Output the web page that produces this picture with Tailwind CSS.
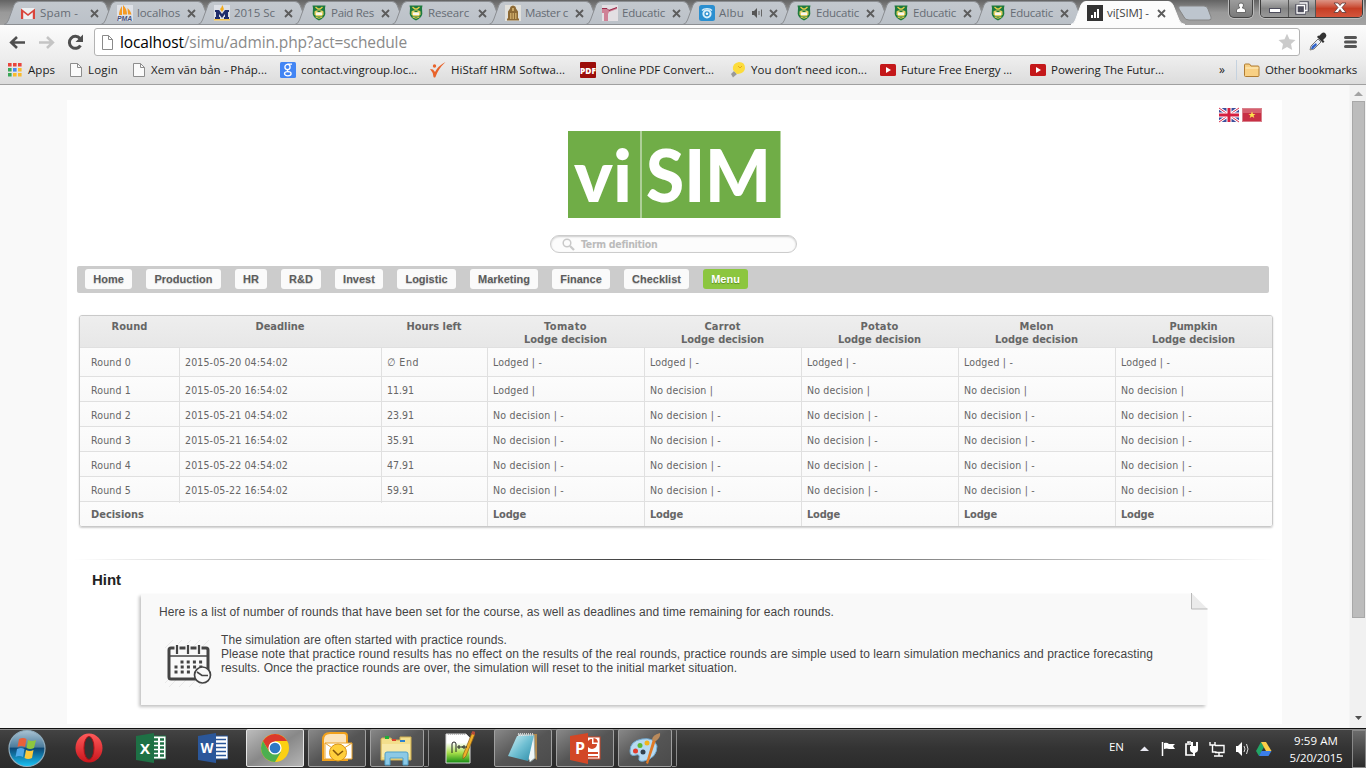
<!DOCTYPE html>
<html lang="en">
<head>
<meta charset="utf-8">
<title>vi[SIM] - Schedule</title>
<script src="https://cdn.jsdelivr.net/npm/@tailwindcss/browser@4"></script>
</head>
<body class="w-[1366px] h-[768px] overflow-hidden bg-[#f9f9f9] font-['Open_Sans','Noto_Sans',sans-serif]">
<svg class="absolute h-0 w-0">
  <defs>
    <linearGradient id="tabg" x1="0" y1="0" x2="0" y2="1"><stop offset="0" stop-color="#c3c8ce"/><stop offset="1" stop-color="#bbc1c8"/></linearGradient>
    <linearGradient id="orb" x1="0" y1="0" x2="0" y2="1"><stop offset="0" stop-color="#a9c3d4"/><stop offset=".45" stop-color="#4d7d9d"/><stop offset=".5" stop-color="#0d4a78"/><stop offset="1" stop-color="#19c3f5"/></linearGradient>
    <linearGradient id="red" x1="0" y1="0" x2="0" y2="1"><stop offset="0" stop-color="#ff5a5a"/><stop offset="1" stop-color="#c9151c"/></linearGradient>
    <linearGradient id="npp" x1="0" y1="0" x2="0" y2="1"><stop offset=".3" stop-color="#fff"/><stop offset=".65" stop-color="#a8e04a"/><stop offset="1" stop-color="#128a12"/></linearGradient>
    <linearGradient id="glass" x1="0" y1="0" x2="1" y2="1"><stop offset="0" stop-color="#d8f2f6"/><stop offset=".5" stop-color="#6fbfd2"/><stop offset="1" stop-color="#2c8ca8"/></linearGradient>
  </defs>
  <symbol id="gmail" viewBox="0 0 16 16"><rect x="1" y="3" width="14" height="11" rx="1" fill="#eceff1"/><path d="M1 14V3.500L8 9l7-5.500V14h-2.200V7.200L8 11 3.200 7.200V14z" fill="#d9453c"/></symbol>
  <symbol id="pma" viewBox="0 0 16 16"><rect width="16" height="16" fill="#dfe2e8"/><path d="M5 1v9H2c0-3 1-6 3-9zM6 0c3 3 4 6 4 9.500H6zM10.500 3c2 2 3.500 4 4 6.500H11z" fill="#f59a23"/><text x="0" y="16" font-family="Liberation Sans" font-style="italic" font-weight="700" font-size="6.800" fill="#45507c">PMA</text></symbol>
  <symbol id="umich" viewBox="0 0 16 16"><rect width="16" height="16" fill="#dde0e6"/><path d="M1 5h4l3 4 3-4h4v2h-1v5h1v2h-5v-2h1V9l-3 4-3-4v3h1v2H1v-2h1V7H1z" fill="#1f2d6b"/><path d="M8 0c2 2 1 3 2 4L8 7 6 4c1-1 2-2 2-4z" fill="#f2ab1d"/><path d="M0 14h16v1.500H0z" fill="#f2c14b"/></symbol>
  <symbol id="shield" viewBox="0 0 16 16"><path d="M1.500.500h13l-.5 2.500.3 6c-.5 3-3 5-6.300 6.500C4.700 14 2.200 12 1.700 9L2 3z" fill="#1d7a3e"/><path d="M4.500 2 7 4h2l2.500-2" stroke="#e9cf4b" stroke-width="1.400" fill="none"/><path d="M3.500 6.500 5 5.500h6l1.500 1v3l-2 2h-5l-2-2z" fill="#e3cf62"/><path d="M5 7.500h6V10H5z" fill="#f8f6ef"/><path d="M6.500 6h3v1h-3z" fill="#1d7a3e"/><path d="M4.500 12q3.500 2.500 7 0" stroke="#e9cf4b" fill="none"/></symbol>
  <symbol id="tower" viewBox="0 0 16 16"><rect width="16" height="16" fill="#e2e1dc"/><path d="M5 3.500Q5 1 8 .5q3 .5 3 3l2 3v7h1v2H2v-2h1v-7z" fill="#8d6a35"/><path d="M7 3h2v3H7zM5 8h1.500v6H5zM7.500 8H9v6H7.500zM10 8h1.500v6H10z" fill="#c9a765"/></symbol>
  <symbol id="pink" viewBox="0 0 16 16"><rect width="16" height="16" fill="#e3dfe3"/><path d="M0 3h4l2 2 9-3v2L7 7l-1 2v7H2V8L0 8z" fill="#cf8196"/><path d="M0 3.500h5l2 2 8-3" stroke="#9a2c4c" fill="none"/></symbol>
  <symbol id="album" viewBox="0 0 16 16"><rect width="16" height="16" rx="2.500" fill="#2b8fd0"/><path d="M3 5.500C5 3 11 3 13 5.500" stroke="#d8effb" stroke-width="1.300" fill="none"/><circle cx="8" cy="8.800" r="3.600" fill="none" stroke="#d8effb" stroke-width="2"/><circle cx="8" cy="8.800" r="1.300" fill="#fff"/></symbol>
  <symbol id="visim" viewBox="0 0 16 16"><rect width="16" height="16" fill="#333"/><path d="M4 10h2v3H4zM7 7h2v6H7zM10 4h2v9h-2z" fill="#fff"/></symbol>
  <symbol id="page" viewBox="0 0 16 16"><path d="M2.500 1.500h7l4 4v9h-11z" fill="#fafafa" stroke="#8d8d8d"/><path d="M9.500 1.500v4h4" fill="none" stroke="#8d8d8d"/></symbol>
  <symbol id="yt" viewBox="0 0 16 16"><rect y="2" width="16" height="12" rx="1.500" fill="#c4181a"/><path d="M6 5v6l5-3z" fill="#fff"/></symbol>
</svg>

<!-- browser tab strip -->
<header class="relative h-[25px] bg-linear-to-b from-[#636363] via-[#999] to-[#a3a3a3]">
  <div id="tabs" class="flex pl-1"></div>
  <svg class="absolute left-[1178px] top-[5px]" width="36" height="16"><path d="M2 1h24q3 0 4 3l3 8q1 3-2 3H11q-4 0-5-3L1 4Q0 1 2 1z" fill="#bdc5ce" stroke="#858585"/></svg>
  <div class="absolute left-[1229px] top-0 h-[18px] w-[24px] rounded-b-[5px] border border-t-0 border-[#444] bg-linear-to-b from-[#9c9c9c] to-[#7a7a7a] shadow-[0_0_0_1px_#bbb]">
    <svg width="22" height="17"><path d="M6.500 12.500V10q1-2 3.500-2.300Q8.500 7 8.500 5 8.500 3 11 3t2.500 2q0 2-1.500 2.700 2.500.3 3.500 2.300v2.500z" fill="#fff" stroke="#555" stroke-width=".8"/></svg>
  </div>
  <div class="absolute left-[1260px] top-0 flex h-[18px] w-[103px] overflow-hidden rounded-b-[5px] border border-t-0 border-[#3c3c3c] shadow-[0_0_0_1px_#bbb]">
    <div class="w-[28px] border-r border-[#555] bg-linear-to-b from-[#b5b5b5] via-[#858585] to-[#999]"><svg width="28" height="17"><rect x="8.500" y="8.500" width="11" height="4" fill="#fff" stroke="#4d4d5c"/></svg></div>
    <div class="w-[27px] border-r border-[#555] bg-linear-to-b from-[#b5b5b5] via-[#858585] to-[#999]"><svg width="27" height="17"><path d="M10.500 2.500h8v8h-2.500M7.500 5.500h8v8h-8zM10 8h3v3h-3z" fill="none" stroke="#4d4d5c" stroke-width="2.600"/><path d="M10.500 3h7.500v7.500h-2M8 5.500h7.500v7.500H8z" fill="none" stroke="#fff" stroke-width="1.300"/></svg></div>
    <div class="flex-1 bg-linear-to-b from-[#dc9485] via-[#c63e25] to-[#d4553c]"><svg width="46" height="17"><path d="M18 3h4l2 2.500L26 3h4l-4 4.500 4 5h-4l-2-3-2 3h-4l4-5z" fill="#fff" stroke="#5c3a38" stroke-width=".8"/></svg></div>
  </div>
</header>

<!-- address bar -->
<div class="flex h-[34px] items-center bg-linear-to-b from-[#fcfcfc] to-[#ededed]">
  <svg width="94" height="34" fill="none" stroke-width="2.600">
    <path d="M11 17.500h14M17 12 11.200 17.500l5.800 5.500" stroke="#4f4f4f"/>
    <path d="M39 17.500h14M47 12 52.800 17.500 47 23" stroke="#c4c4c4"/>
    <path d="M80.500 20.500a6 6 0 1 1-.5-7" stroke="#4f4f4f" stroke-width="3"/><path d="M83 9.500v7.500h-7.500z" fill="#4f4f4f"/>
  </svg>
  <div class="flex h-[28px] w-[1206px] items-center rounded-[3px] border border-[#b3b3b3] bg-white">
    <svg class="ml-[5px]" width="17" height="17" viewBox="0 0 17 17"><path d="M2.500 1.500h6l4 4v10h-10z" fill="#fff" stroke="#8a8a8a"/><path d="M8.500 1.500v4h4" fill="none" stroke="#8a8a8a"/></svg>
    <span class="ml-[3px] text-[15.5px] leading-[20px] whitespace-nowrap text-[#8a8a8a]" data-w="287"><span class="text-black">localhost</span>/simu/admin.php?act=schedule</span>
    <svg class="mr-[3px] ml-auto" width="18" height="18" viewBox="0 0 18 18"><path d="m9 .8 2.500 5.500 6 .7-4.500 4.100 1.200 6L9 14.100l-5.200 3 1.200-6L.5 7l6-.7z" fill="#cbcbcb"/></svg>
  </div>
  <svg class="ml-2" width="20" height="20" viewBox="0 0 20 20"><path d="m2 18 1-4 7-7 3 3-7 7z" fill="#e8edf5" stroke="#777"/><path d="m3 17 1-3 4-3 1 2-4 4z" fill="#2f62c9"/><path d="m9 5 6 6 1.500-1.500L15 8l3-3q1-2-.5-3.500T14 1l-3 3-.8-.5z" fill="#333"/></svg>
  <svg class="ml-[16px]" width="14" height="16"><path d="M1.500 3.500h10M1.500 8h10M1.500 12.500h10" stroke="#555" stroke-width="3" stroke-linecap="round"/></svg>
</div>

<!-- bookmarks -->
<div class="flex h-[26px] items-center border-b border-[#a0a0a0] bg-linear-to-b from-[#ededed] to-[#dcdcdc] pb-[4px] text-[11.5px] leading-[16px] whitespace-nowrap text-[#1c1c1c]">
  <div class="flex w-[60px] shrink-0 items-center gap-[6px] pl-2">
    <svg width="14" height="14"><path d="M0 0h3.600v3.600H0zM5 0h3.600v3.600H5zM10 0h3.600v3.600H10z" fill="#e8453c"/><path d="M0 5h3.600v3.600H0zM0 10h3.600v3.600H0z" fill="#3aa757"/><path d="M5 5h3.600v3.600H5z" fill="#4688f1"/><path d="M10 5h3.600v3.600H10zM5 10h3.600v3.600H5zM10 10h3.600v3.600H10z" fill="#f9bb2d"/></svg><span data-w="27">Apps</span></div>
  <div class="flex w-[71px] shrink-0 items-center gap-[4px] pl-2"><svg width="16" height="16"><use href="#page"/></svg><span data-w="30">Login</span></div>
  <div class="flex w-[149px] shrink-0 items-center gap-[4px]"><svg width="16" height="16"><use href="#page"/></svg><span data-w="116">Xem văn bản - Pháp...</span></div>
  <div class="flex w-[149px] shrink-0 items-center gap-[5px]"><svg width="16" height="16"><rect width="16" height="16" rx="1.500" fill="#4285f4"/><g fill="none" stroke="#fff" stroke-width="1.300"><circle cx="7.500" cy="5" r="2.600"/><path d="M12 2.200H7.500M8 7.500q-1.500 1 .5 2.300"/><ellipse cx="7.800" cy="11.800" rx="3.300" ry="2.100"/></g></svg><span data-w="116">contact.vingroup.loc...</span></div>
  <div class="flex w-[151px] shrink-0 items-center gap-[5px]"><svg width="17" height="16"><path d="M1 7l3 .5L6 10q3-6 10.500-10Q9 7 6.500 15q-1 1-2 0Q4 10 1 7z" fill="#e8632b"/><circle cx="5.500" cy="4" r="1.700" fill="#e8632b"/></svg><span data-w="114">HiStaff HRM Softwa...</span></div>
  <div class="flex w-[150px] shrink-0 items-center gap-[5px]"><svg width="16" height="16"><rect width="16" height="16" rx="1" fill="#9c0d0a"/><text x="0" y="11.500" font-family="Open Sans" font-weight="800" font-size="8.500" textLength="16" lengthAdjust="spacingAndGlyphs" fill="#fff">PDF</text></svg><span data-w="113">Online PDF Convert...</span></div>
  <div class="flex w-[150px] shrink-0 items-center gap-[4px]"><svg width="17" height="16"><path d="m1 12 3-3 3 3-4 3.500z" fill="#999"/><path d="M3 8Q2 1 9 0q6 0 6 6 0 5-7 6-2 0-2-1z" fill="#fcdc3c"/><path d="m8 4 2 2 2-2" stroke="#e5a91c" fill="none"/></svg><span data-w="116">You don’t need icon...</span></div>
  <div class="flex w-[150px] shrink-0 items-center gap-[5px]"><svg width="16" height="16"><use href="#yt"/></svg><span data-w="111">Future Free Energy ...</span></div>
  <div class="flex w-[189px] shrink-0 items-center gap-[5px]"><svg width="16" height="16"><use href="#yt"/></svg><span data-w="113">Powering The Futur...</span></div>
  <span class="w-[17px] shrink-0 text-[12px]">»</span>
  <div class="flex h-[20px] items-center gap-[5px] border-l border-[#c5d2df] pl-[7px]"><svg width="16" height="14"><path d="M.5 12.500V2q0-1 1-1h4l1.500 2h7q1 0 1 1v8.500q0 1-1 1h-12.500q-1 0-1-1z" fill="#f8d084" stroke="#b07c32"/><path d="M1.500 5h13" stroke="#fff0c5"/></svg><span data-w="92">Other bookmarks</span></div>
</div>

<!-- page viewport -->
<div class="flex h-[643px] overflow-hidden">
  <div class="w-[1349px] pt-[15px] pl-[67px]">
    <main class="h-[624px] w-[1215px] bg-white text-[#666]">
      <div class="flex h-[31px] justify-end gap-[3px] pt-[7px] pr-[20px]">
        <svg width="20" height="16" viewBox="0 0 20 16"><rect y="1" width="20" height="14" fill="#3d4d9c"/><path d="M0 1l20 14M20 1 0 15" stroke="#fff" stroke-width="3"/><path d="M0 1l20 14M20 1 0 15" stroke="#d9304a" stroke-width="1"/><path d="M10 1v14M0 8h20" stroke="#fff" stroke-width="5"/><path d="M10 1v14M0 8h20" stroke="#d5203f" stroke-width="3"/></svg>
        <svg width="20" height="16" viewBox="0 0 20 16"><rect x=".5" y="1.500" width="19" height="13" fill="#c83045" stroke="#d9818c"/><path d="M1 2h18v4H1z" fill="#dc7480" opacity=".7"/><path d="m10 4.500 1 2.500h2.500l-2 1.600.8 2.500L10 9.600l-2.300 1.500.8-2.500-2-1.600H9z" fill="#fce34d"/></svg>
      </div>
      <svg class="ml-[501px]" width="213" height="87"><rect width="212.500" height="87" fill="#70ad47"/><path d="M73 0v87" stroke="#c9dfbb" stroke-width="1.400"/>
        <g fill="#fff" font-family="Lato" font-weight="900"><text x="6" y="71" font-size="72" textLength="58" lengthAdjust="spacingAndGlyphs">vi</text><text x="78" y="71" font-size="72" textLength="125" lengthAdjust="spacingAndGlyphs">SIM</text></g></svg>
      <div class="mt-[17px] ml-[483px] flex h-[18px] w-[247px] items-center rounded-full border border-[#ccc] bg-[#fcfcfc] pl-[11px] shadow-[inset_0_1px_2px_#ccc]">
        <svg width="14" height="13"><circle cx="5" cy="5" r="3.800" fill="none" stroke="#c9c9c9" stroke-width="1.500"/><path d="m8 8 4 4" stroke="#c9c9c9" stroke-width="2.300"/></svg>
        <span class="ml-[5px] font-['DejaVu_Sans_Condensed','DejaVu_Sans',sans-serif] text-[10.5px] leading-[14px] font-bold whitespace-nowrap text-[#bbb]" data-w="76">Term definition</span>
      </div>

      <nav class="mt-[13px] ml-[10px] flex h-[27px] w-[1192px] gap-[14px] rounded-[2px] bg-[#ccc] py-[3px] pl-2 text-center font-['Liberation_Sans',Arial,sans-serif] text-[11px] leading-[21px] font-bold text-[#5c5c5c] text-shadow-[0_1px_1px_#ccc]">
        <a class="h-[20px] w-[47px] rounded-[3px] bg-[#fafafa]">Home</a>
        <a class="h-[20px] w-[75px] rounded-[3px] bg-[#fafafa]">Production</a>
        <a class="h-[20px] w-[32px] rounded-[3px] bg-[#fafafa]">HR</a>
        <a class="h-[20px] w-[40px] rounded-[3px] bg-[#fafafa]">R&amp;D</a>
        <a class="h-[20px] w-[48px] rounded-[3px] bg-[#fafafa]">Invest</a>
        <a class="h-[20px] w-[59px] rounded-[3px] bg-[#fafafa]">Logistic</a>
        <a class="h-[20px] w-[68px] rounded-[3px] bg-[#fafafa]">Marketing</a>
        <a class="h-[20px] w-[58px] rounded-[3px] bg-[#fafafa]">Finance</a>
        <a class="h-[20px] w-[65px] rounded-[3px] bg-[#fafafa]">Checklist</a>
        <a class="h-[20px] w-[45px] rounded-[3px] bg-[#8cc63f] text-white text-shadow-[0_1px_1px_#5a8a20]">Menu</a>
      </nav>

      <section id="schedule" class="mt-[22px] ml-[12px] w-[1194px] overflow-hidden rounded-[3px] border border-[#c9c9c9] font-['DejaVu_Sans_Condensed','DejaVu_Sans',sans-serif] text-[10.5px] shadow-[0_1px_2px_#ccc]">
        <div class="grid h-[31px] grid-cols-[99px_202px_106px_repeat(5,157px)] bg-linear-to-b from-[#eee] to-[#e7e7e7] pt-[4px] text-center text-[11px] leading-[13px] font-bold text-[#666]">
          <div><span data-w="36">Round</span></div><div><span data-w="49">Deadline</span></div><div><span data-w="55">Hours left</span></div>
          <div><span data-w="43">Tomato</span><br><span data-w="83">Lodge decision</span></div>
          <div><span data-w="36">Carrot</span><br><span data-w="83">Lodge decision</span></div>
          <div><span data-w="38">Potato</span><br><span data-w="83">Lodge decision</span></div>
          <div><span data-w="34">Melon</span><br><span data-w="83">Lodge decision</span></div>
          <div><span data-w="48">Pumpkin</span><br><span data-w="83">Lodge decision</span></div>
        </div>
      </section>

      <div class="mt-[32px] ml-[7px] h-px w-[1200px] bg-linear-to-r from-transparent via-[#333] to-transparent"></div>
      <h2 class="mt-[11px] ml-[25px] font-['Liberation_Sans',Arial,sans-serif] text-[15px] leading-[18px] font-bold text-[#222]"><span data-w="29">Hint</span></h2>
      <article class="relative mt-[5px] ml-[74px] h-[111px] w-[1066px] bg-[#f9f9f9] pt-[11px] pl-[18px] font-['Liberation_Sans',Arial,sans-serif] text-[12px] leading-[14px] whitespace-nowrap text-[#444] shadow-[-2px_2px_3px_#c4c4c4]">
        <p><span data-w="675">Here is a list of number of rounds that have been set for the course, as well as deadlines and time remaining for each rounds.</span></p>
        <div class="mt-[14px] flex">
          <svg class="mt-[6px] ml-[5px] mr-[9px]" width="48" height="50" viewBox="0 0 48 50">
            <path d="m1 9 8-8M4 15 18 1M15 13 27 1M25 12 36 1M36 10l9-9M1 44l9-9M5 48l10-10M15 48l9-9M25 48l9-9M35 48l11-11" stroke="#e9e9e9"/>
            <rect x="5" y="9" width="39" height="31" rx="2" fill="#f9f9f9" stroke="#444" stroke-width="3"/><path d="M5 17h39" stroke="#444" stroke-width="1.500"/>
            <path d="M13 5v10M24 5v10M35 5v10" stroke="#f9f9f9" stroke-width="5"/><path d="M13 6v9M24 6v9M35 6v9" stroke="#444" stroke-width="2.200"/>
            <path d="M16.500 23h22M10.500 28h28M10.500 33h18" stroke="#444" stroke-width="3" stroke-dasharray="3 3.200"/>
            <circle cx="38.500" cy="36" r="8" fill="#f9f9f9" stroke="#444" stroke-width="1.700"/><path d="m33 33 5 3.500h6" fill="none" stroke="#444" stroke-width="1.600"/>
          </svg>
          <div>
            <p><span data-w="286">The simulation are often started with practice rounds.</span></p>
            <p><span data-w="932">Please note that practice round results has no effect on the results of the real rounds, practice rounds are simple used to learn simulation mechanics and practice forecasting</span></p>
            <p><span data-w="516">results. Once the practice rounds are over, the simulation will reset to the initial market situation.</span></p>
          </div>
        </div>
        <svg class="absolute -top-px -right-px" width="18" height="17"><path d="M1 0h17v16z" fill="#fff"/><path d="M1.500 0v16h16z" fill="#ebebeb"/><path d="M1.500 0v16h16" fill="none" stroke="#b9b9b9"/></svg>
      </article>
    </main>
  </div>
  <div class="flex w-[17px] flex-col items-center border-l border-[#f5f5f5] bg-[#f1f1f1]">
    <svg width="9" height="16"><path d="m0 11 4.500-4.500L9 11z" fill="#a3a3a3"/></svg>
    <div class="h-[517px] w-[13px] border border-[#a8a8a8] bg-[#bcbcbc]"></div>
    <svg class="mt-auto mb-[1px]" width="9" height="16"><path d="m1 5 3.500 4L8 5z" fill="#505050"/></svg>
  </div>
</div>

<!-- taskbar -->
<footer class="flex h-[40px] border-t border-[#111] bg-linear-to-b from-[#444] via-[#333] to-[#2b2b2b] shadow-[inset_0_1px_0_#8b8b8b]">
  <div class="flex w-[58px] justify-center pr-[4px]"><svg width="40" height="39" viewBox="0 0 40 39"><circle cx="20" cy="19.500" r="18" fill="url(#orb)" stroke="#8facbd" stroke-width="1.200"/><path d="M12 10q4-2 7.500 0l-1.500 8q-4-2-7.500 0z" fill="#e8603a"/><path d="M21 11q4 2 8 0l-2 8q-4 2-7.500 0z" fill="#8dc63f"/><path d="M10 20q4-2 7.500 0L16 28q-4-2-7.500 0z" fill="#4fa8e8"/><path d="M19 21q4 2 7.500 0L25 29q-4 2-7.500 0z" fill="#fcc93c"/></svg></div>
  <div class="flex w-[62px] justify-center"><svg width="30" height="39"><ellipse cx="15" cy="19" rx="13.500" ry="14.500" fill="url(#red)"/><ellipse cx="15" cy="19" rx="5" ry="11.500" fill="#333" stroke="#a81116"/></svg></div>
  <div class="flex w-[62px] justify-center"><svg width="30" height="39"><rect x="14" y="7" width="16" height="23" fill="#fff" stroke="#1e7145"/><path d="M18 10.500h4M24 10.500h4M18 14.500h4M24 14.500h4M18 18.500h4M24 18.500h4M18 22.500h4M24 22.500h4M18 26.500h4M24 26.500h4" stroke="#1e7145" stroke-width="2.500"/><path d="m0 7 18-3v30L0 31z" fill="#1e7145"/><text x="4" y="25" font-family="Open Sans" font-weight="700" font-size="15" fill="#fff">X</text></svg></div>
  <div class="flex w-[62px] justify-center"><svg width="30" height="39"><rect x="14" y="7" width="16" height="23" fill="#fff" stroke="#2b579a"/><path d="M18 10.500h10M18 14.500h10M18 18.500h10M18 22.500h10M18 26.500h10" stroke="#2b579a" stroke-width="1.700"/><path d="m0 7 18-3v30L0 31z" fill="#2b579a"/><text x="2.500" y="24" font-family="Open Sans" font-weight="700" font-size="14" textLength="13" lengthAdjust="spacingAndGlyphs" fill="#fff">W</text></svg></div>
  <div class="flex w-[62px] justify-center"><div class="flex h-[38px] w-[58px] justify-center rounded-[2px] border border-[#e6e6e6] bg-linear-to-br from-[#bcbcbc] via-[#888] to-[#b5b5b5]"><svg width="30" height="36" viewBox="0 0 30 36"><circle cx="15" cy="18" r="14" fill="#fbd013"/><path d="M15 11h12.100A14 14 0 0 0 2.900 11L9 21z" fill="#db3a2c"/><path d="M2.900 11A14 14 0 0 0 15 32l6.100-10.500L15 24l-6-2.500z" fill="#4caf50"/><circle cx="15" cy="18" r="6.600" fill="#fff"/><circle cx="15" cy="18" r="5.300" fill="#2f78c4"/></svg></div></div>
  <div class="flex w-[62px] justify-center"><div class="flex h-[38px] w-[58px] justify-center rounded-[2px] border border-[#a0a0a0] bg-linear-to-br from-[#888] via-[#555] to-[#4b4b4b]"><svg width="34" height="36"><path d="M3 30V10q0-7 7-7h14q3 0 3 3v24z" fill="#fbe3bb" stroke="#f0a01c" stroke-width="2"/><path d="M5 13h27v16H5z" fill="#fff" stroke="#e9a32c"/><path d="m5 13 13 9 14-9" fill="none" stroke="#e9a32c"/><circle cx="18" cy="22.500" r="8.500" fill="#ffcf3c" stroke="#d9941a"/><path d="m13 20 5 5 5-4" fill="none" stroke="#85570b" stroke-width="1.600"/></svg></div></div>
  <div class="flex w-[62px] pl-[2px]"><div class="flex h-[38px] w-[54px] justify-center rounded-[2px] border border-[#a0a0a0] bg-linear-to-br from-[#888] via-[#555] to-[#4b4b4b]"><svg width="34" height="36"><path d="M2 8h9l1 2h8V7h11v23H1V9z" fill="#f3df8c" stroke="#cfae52"/><path d="M5 6h4v3H5z" fill="#1fae3a"/><path d="M12 9h4v2h-4z" fill="#d9432f"/><path d="M20 10h5v2h-5z" fill="#2e83cf"/><path d="M2 14h28v13H2z" fill="#f8e9a8"/><path d="M5 35V24q0-2 2-2h19q2 0 2 2v11h-5v-7H10v7z" fill="#8cc9e6" stroke="#4f9fc8"/></svg></div><div class="h-[38px] w-[5px] rounded-r-[2px] border border-l-0 border-[#8c8c8c]"></div></div>
  <div class="flex w-[62px] justify-center"><svg class="ml-[-2px]" width="30" height="39"><path d="M1 5h20l4 4v25H1z" fill="url(#npp)" stroke="#d9d9d9"/><path d="M3 5h18" stroke="#888" stroke-dasharray="1 1"/><path d="m18 26 9-22 3 1-9 22-3 3z" fill="#efaf2a" stroke="#8b5f18" stroke-width=".7"/><path d="m26 5 1.500-3 3 1L29.500 6z" fill="#b34a3a"/><path d="M7 24v-9q0-2 2-2t2 2v8M12 18h6M14 16v4M17 18h5M19 16v4" stroke="#222" fill="none"/></svg></div>
  <div class="flex w-[62px] justify-center"><div class="flex h-[38px] w-[58px] justify-center rounded-[2px] border border-[#a0a0a0] bg-linear-to-br from-[#888] via-[#555] to-[#4b4b4b]"><svg width="34" height="36"><path d="M27 4h4v26l-4-3z" fill="#b0894c"/><path d="m12 4 16 1 1 23-5 4z" fill="#eef6f8" stroke="#9aa"/><path d="m11 6 17-1-6 26-20-5z" fill="url(#glass)"/><path d="M12 4.500h16" stroke="#ccc" stroke-width="3" stroke-dasharray="1 1"/></svg></div></div>
  <div class="flex w-[62px] justify-center"><div class="flex h-[38px] w-[58px] justify-center rounded-[2px] border border-[#a0a0a0] bg-linear-to-br from-[#888] via-[#555] to-[#4b4b4b]"><svg width="31" height="36"><rect x="14" y="7" width="16" height="22" fill="#fff" stroke="#d24726"/><path d="M22 9v5h5a5 5 0 1 1-5-5zM23.500 8a5 5 0 0 1 4.500 4.500h-4.500zM18 22h10v2H18zM18 26h10v1.500H18z" fill="#d24726"/><path d="m0 6 18-3v31L0 30z" fill="#d24726"/><text x="5" y="24" font-family="Open Sans" font-weight="700" font-size="16" fill="#fff">P</text></svg></div></div>
  <div class="flex w-[62px] pl-[2px]"><div class="flex h-[38px] w-[54px] justify-center rounded-[2px] border border-[#a0a0a0] bg-linear-to-br from-[#888] via-[#555] to-[#4b4b4b]"><svg width="34" height="36"><path d="M2 21Q2 11 14 9q12-2 15 7 0 12-13 15-6 1-5-3t-3-3q-6 2-6-4z" fill="#b7daf2" stroke="#6fa8d0"/><circle cx="7.500" cy="21" r="2.500" fill="#e23d2e"/><circle cx="12" cy="15.500" r="2.500" fill="#5cb837"/><circle cx="19" cy="13" r="2.500" fill="#f2b41c"/><circle cx="15" cy="22" r="2.500" fill="#33414e"/><path d="m18 33 7-24 3 1-8 24z" fill="#e07a26"/><path d="M24 10q0-5 8-7 1 4-4 8z" fill="#b98a5c"/></svg></div><div class="h-[38px] w-[5px] rounded-r-[2px] border border-l-0 border-[#8c8c8c]"></div></div>
  <div class="ml-auto flex items-center text-[11.5px] leading-[17px] whitespace-nowrap text-white">
    <span class="mb-[5px]" data-w="15">EN</span>
    <svg class="ml-[16px]" width="132" height="39">
      <path d="m0 22 4.500-4.500L9 22z" fill="#e9e9f2"/>
      <path d="M22.500 13v14" stroke="#fff" stroke-width="1.500"/><path d="M24 14q3-1 5 1h6l-2 2 2 3h-6q-2-1-5 0z" fill="#fff"/>
      <path d="M51 15h-5v11h7M48 14v-1h3" fill="none" stroke="#fff" stroke-width="1.700"/><path d="M50 17h8v4q0 2-3 3v3h-2v-3q-3-1-3-3zM51 13h2v4h-2zM56 13h2v4h-2z" fill="#fff"/>
      <path d="M75 16.500h9v7h-9M79 24v3M74 27h9M70 13v3h5v-3M72.500 16v7h4" fill="none" stroke="#fff" stroke-width="1.400"/>
      <path d="M96 17h2l4-4v14l-4-4h-2z" fill="#fff"/><path d="M104 17q2 3 0 6M106.500 15q3 5 0 10" fill="none" stroke="#ddd"/>
      <path d="m121 13-5 9 3 5 5-9z" fill="#22a565"/><path d="M121 13h5l5.500 9H126z" fill="#fccd48"/><path d="M121.500 22h10l-3 5H119z" fill="#3b7ee8"/>
    </svg>
    <div class="flex w-[54px] flex-col items-center ml-[17px]"><span data-w="44">9:59 AM</span><span data-w="53">5/20/2015</span></div>
    <div class="ml-[9px] h-[38px] w-[14px] border border-[#888] bg-linear-to-b from-[#6b6b6b] to-[#2c2c2c]"></div>
  </div>
</footer>

<script>
  const tabs = [['gmail','Spam -',38],['pma','localhos',43],['umich','2015 Sc',41],['shield','Paid Res',43],['shield','Researc',41],['tower','Master c',43],['pink','Educatic',43],['album','Albu',25],['shield','Educatic',43],['shield','Educatic',43],['shield','Educatic',43],['visim','vi[SIM] -',42]];
  document.getElementById('tabs').innerHTML = tabs.map(([icon, title, w], i) => {
    const active = i === 11;
    return `<div class="relative -mr-[17px] flex h-[25px] w-[114px] shrink-0 items-center pl-4 ${active ? 'z-10' : ''}">
      <svg class="absolute inset-0" width="114" height="25"><path d="M0 24.500Q3 24 4.500 20L10 5Q11.500 1.500 15 1.500H97Q100.500 1.500 102 5L108 20Q109.500 24 114 24.500z" fill="${active ? '#fcfcfc' : 'url(#tabg)'}" stroke="${active ? '#fcfcfc' : '#8b8e92'}"/></svg>
      <svg class="relative mt-px shrink-0" width="16" height="16"><use href="#${icon}"/></svg>
      <span class="relative ml-[4px] text-[11.5px] leading-[16px] whitespace-nowrap ${active ? 'text-[#444]' : 'text-[#666c74]'}" data-w="${w}">${title}</span>
      ${icon === 'album' ? '<svg class="relative ml-2" width="12" height="10"><path d="M0 3h2l3-3v10L2 7H0z" fill="#555"/><path d="M7 3v4M9.500 1.500v7" stroke="#666"/></svg>' : ''}
      <svg class="absolute left-[86px] top-[9px]" width="9" height="9"><path d="m1 1 7 7M8 1 1 8" stroke="#5c5c5c" stroke-width="1.800"/></svg>
    </div>`;
  }).join('');

  const rows = [
    ['Round 0','2015-05-20 04:54:02','∅ End','Lodged | -','Lodged | -','Lodged | -','Lodged | -','Lodged | -'],
    ['Round 1','2015-05-20 16:54:02','11.91','Lodged |','No decision |','No decision |','No decision |','No decision |'],
    ['Round 2','2015-05-21 04:54:02','23.91'],
    ['Round 3','2015-05-21 16:54:02','35.91'],
    ['Round 4','2015-05-22 04:54:02','47.91'],
    ['Round 5','2015-05-22 16:54:02','59.91']
  ];
  const widths = {'∅ End':32,'Lodged | -':49,'Lodged |':42,'No decision |':63,'No decision | -':71};
  const table = document.getElementById('schedule');
  rows.forEach((row, i) => {
    while (row.length < 8) row.push('No decision | -');
    table.insertAdjacentHTML('beforeend', `<div class="grid grid-cols-[99px_202px_106px_repeat(5,157px)] items-stretch border-t border-[#e0e0e0] bg-linear-to-b from-[#fcfcfc] to-[#f9f9f9] ${i ? 'h-[25px] leading-[26px]' : 'h-[29px] leading-[29px]'}">` +
      row.map((t, c) => `<div class="whitespace-nowrap ${c ? 'border-l border-[#e0e0e0] pl-[5px]' : 'pl-[11px]'}"><span data-w="${c === 0 ? 40 : c === 1 ? 103 : widths[t] || 27}">${t}</span></div>`).join('') + '</div>');
  });
  table.insertAdjacentHTML('beforeend', `<div class="grid h-[25px] grid-cols-[407px_repeat(5,157px)] border-t border-[#e0e0e0] bg-linear-to-b from-[#fcfcfc] to-[#f9f9f9] text-[11px] leading-[26px] font-bold"><div class="pl-[11px]"><span data-w="53">Decisions</span></div>` +
    '<div class="border-l border-[#e0e0e0] pl-[5px]"><span data-w="33">Lodge</span></div>'.repeat(5) + '</div>');

  // Even out the spacing of each label so that it fills its width.
  function fitLabels() {
    document.querySelectorAll('[data-w]').forEach(el => {
      el.style.letterSpacing = '0px';
      const gap = (el.dataset.w - el.getBoundingClientRect().width) / el.textContent.length;
      el.style.letterSpacing = gap.toFixed(3) + 'px';
    });
  }
  new ResizeObserver(fitLabels).observe(document.body);
  window.addEventListener('load', fitLabels);
  document.fonts.ready.then(fitLabels);
</script>
</body>
</html>
